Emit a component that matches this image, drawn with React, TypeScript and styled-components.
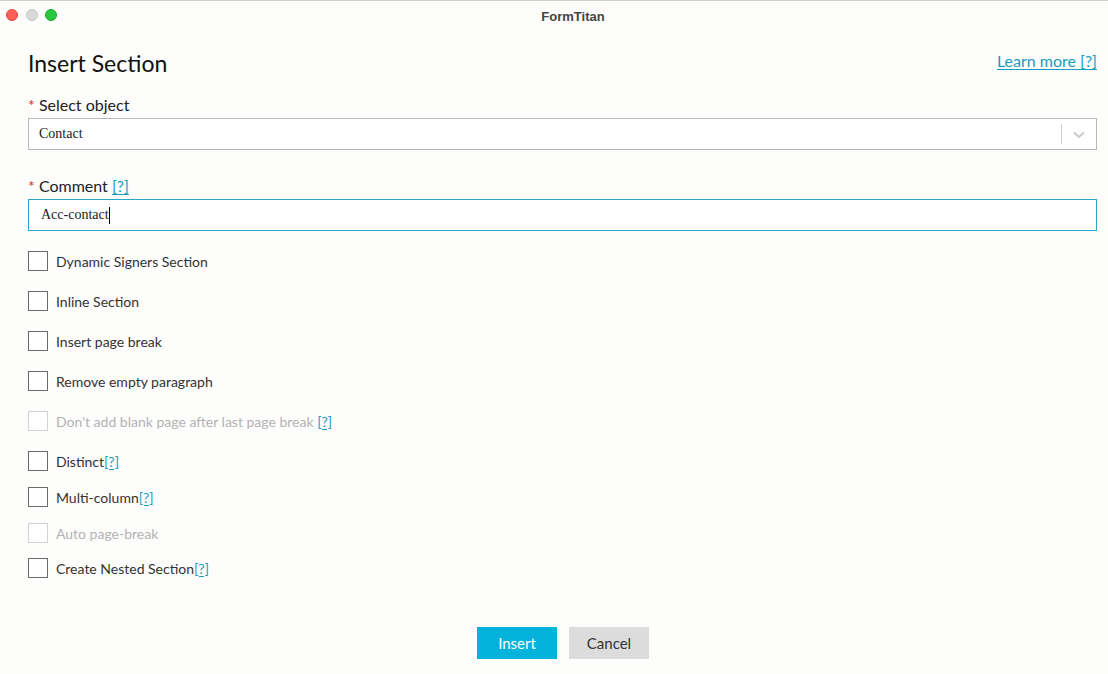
import React from 'react';
import styled, {createGlobalStyle} from 'styled-components';

const GlobalStyle = createGlobalStyle`
    html, body {
        margin: 0;
        padding: 0;
        background: #fdfdfc;
    }
    body {
        font-family: Lato, "Noto Sans", sans-serif;
        color: #333;
    }
`

const options = [
    {label: 'Dynamic Signers Section', gap: 0},
    {label: 'Inline Section', gap: 20},
    {label: 'Insert page break', gap: 20},
    {label: 'Remove empty paragraph', gap: 20},
    {label: "Don't add blank page after last page break", gap: 20, disabled: true, help: true, spaced: true},
    {label: 'Distinct', gap: 20, help: true},
    {label: 'Multi-column', gap: 16, help: true},
    {label: 'Auto page-break', gap: 16, disabled: true},
    {label: 'Create Nested Section', gap: 15, help: true},
];

export default function App() {
    return (
        <Window>
            <GlobalStyle />
            <TitleBar>
                <Lights>
                    <Light color="#fe5f57" border="#e0443e" />
                    <Light color="#d9d9d9" border="#c4c4c4" />
                    <Light color="#28c840" border="#1aab29" />
                </Lights>
                <WindowTitle>FormTitan</WindowTitle>
            </TitleBar>
            <Content>
                <Header>
                    <Title>Insert Section</Title>
                    <LearnMore href="#">Learn more [?]</LearnMore>
                </Header>

                <Label><Required>*</Required> Select object</Label>
                <SelectBox>
                    <FieldText>Contact</FieldText>
                    <SelectDivider />
                    <Chevron width="12" height="8" viewBox="0 0 12 8">
                        <path d="M1 1.5 L6 6 L11 1.5" fill="none" stroke="#c8c8c8" strokeWidth="1.8" />
                    </Chevron>
                </SelectBox>

                <Label top={26}><Required>*</Required> Comment <Help>[?]</Help></Label>
                <InputBox>
                    <FieldText>Acc-contact</FieldText>
                    <Caret />
                </InputBox>

                <Options>
                    {options.map(o => (
                        <OptionRow key={o.label} gap={o.gap}>
                            <Box disabled={o.disabled} />
                            <OptionLabel disabled={o.disabled}>
                                {o.label}
                                {o.spaced && ' '}
                                {o.help && <Help>[?]</Help>}
                            </OptionLabel>
                        </OptionRow>
                    ))}
                </Options>

                <Buttons>
                    <Button primary>Insert</Button>
                    <Button>Cancel</Button>
                </Buttons>
            </Content>
        </Window>
    );
}

const Window = styled.div`
    width: 1108px;
    height: 674px;
    box-sizing: border-box;
    border-top: 1px solid #cfcfcf;
    background: #fdfdfc;
    display: flex;
    flex-direction: column;
    overflow: hidden;
`
const TitleBar = styled.div`
    height: 29px;
    position: relative;
    display: flex;
    align-items: center;
    justify-content: center;
`
const Lights = styled.div`
    position: absolute;
    left: 6px;
    top: 8px;
    display: flex;
    gap: 7.5px;
`
const Light = styled.div<{color: string; border: string}>`
    width: 12px;
    height: 12px;
    box-sizing: border-box;
    border-radius: 50%;
    background: ${props => props.color};
    border: 0.5px solid ${props => props.border};
`
const WindowTitle = styled.div`
    font-family: "Liberation Sans", Arial, sans-serif;
    font-weight: bold;
    font-size: 13px;
    color: #444;
    margin: 1px 0 0 38px;
`
const Content = styled.div`
    display: flex;
    flex-direction: column;
    padding: 17px 11px 0 28px;
`
const Header = styled.div`
    display: flex;
    justify-content: space-between;
    align-items: flex-start;
    height: 48px;
`
const Title = styled.h1`
    margin: 0;
    font-weight: normal;
    font-size: 23px;
    line-height: 32px;
    color: #111;
`
const LearnMore = styled.a`
    color: #1a9cc0;
    font-size: 16px;
    line-height: 28px;
    text-decoration: underline;
    text-underline-offset: 2px;
`
const Label = styled.div<{top?: number}>`
    font-size: 16px;
    line-height: 20px;
    color: #222;
    margin-top: ${props => props.top || 0}px;
    margin-bottom: 3px;
`
const Required = styled.span`
    color: #d0312d;
`
const Help = styled.span`
    color: #1a9cc0;
    text-decoration: underline;
    text-decoration-thickness: 1px;
    text-underline-offset: 2px;
`
const SelectBox = styled.div`
    height: 32px;
    box-sizing: border-box;
    border: 1px solid #b8b8b8;
    background: #fff;
    display: flex;
    align-items: center;
    padding-left: 10px;
`
const FieldText = styled.span`
    font-family: "Liberation Serif", "Times New Roman", serif;
    font-size: 14px;
    color: #222;
    flex: 0 0 auto;
`
const SelectDivider = styled.div`
    margin-left: auto;
    width: 1px;
    height: 20px;
    background: #cfcfcf;
`
const Chevron = styled.svg`
    margin: 2px 11px 0 11px;
`
const InputBox = styled.div`
    height: 32px;
    box-sizing: border-box;
    border: 1px solid #2aa7c9;
    background: #fff;
    display: flex;
    align-items: center;
    padding-left: 12px;
`
const Caret = styled.span`
    width: 1px;
    height: 17px;
    background: #000;
`
const Options = styled.div`
    display: flex;
    flex-direction: column;
    margin-top: 20px;
`
const OptionRow = styled.div<{gap: number}>`
    display: flex;
    align-items: center;
    height: 20px;
    margin-top: ${props => props.gap}px;
`
const Box = styled.div<{disabled?: boolean}>`
    width: 20px;
    height: 20px;
    box-sizing: border-box;
    border: 1px solid ${props => props.disabled ? '#d2d2d2' : '#6b6b6b'};
    background: #fff;
    margin-right: 8px;
`
const OptionLabel = styled.span<{disabled?: boolean}>`
    font-size: 14px;
    color: ${props => props.disabled ? '#b3b3b3' : '#333'};
`
const Buttons = styled.div`
    display: flex;
    justify-content: center;
    gap: 12px;
    margin-top: 49px;
    padding-left: 1px;
`
const Button = styled.button<{primary?: boolean}>`
    width: 80px;
    height: 32px;
    border: none;
    font-family: Lato, "Noto Sans", sans-serif;
    font-size: 15px;
    background: ${props => props.primary ? '#04b3dc' : '#dcdcdc'};
    color: ${props => props.primary ? '#fff' : '#333'};
    cursor: pointer;
`
